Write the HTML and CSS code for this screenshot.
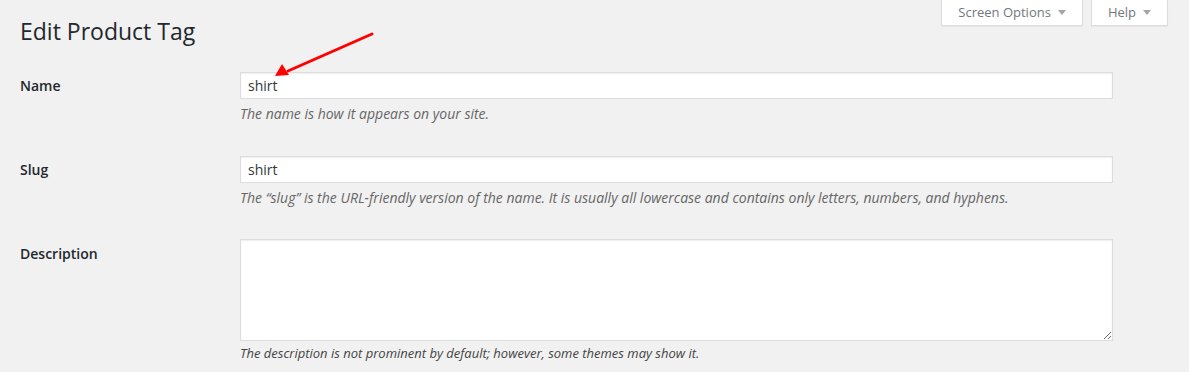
FILE: index.html
```html
<!DOCTYPE html>
<html lang="en">
<head>
<meta charset="utf-8">
<title>Edit Product Tag</title>
<link rel="stylesheet" href="styles.css">
</head>
<body>
<div class="wrap">
  <div class="topbar">
    <h1 class="page-title">Edit Product Tag</h1>
    <div class="screen-links">
      <button class="meta-btn" type="button">Screen Options<span class="caret"></span></button>
      <button class="meta-btn" type="button">Help<span class="caret"></span></button>
    </div>
  </div>

  <form class="form-table">
    <div class="row">
      <label class="th" for="tag-name">Name</label>
      <div class="td">
        <input id="tag-name" class="text-input" type="text" value="shirt">
        <p class="description">The name is how it appears on your site.</p>
      </div>
    </div>
    <div class="row">
      <label class="th" for="tag-slug">Slug</label>
      <div class="td">
        <input id="tag-slug" class="text-input" type="text" value="shirt">
        <p class="description">The “slug” is the URL-friendly version of the name. It is usually all lowercase and contains only letters, numbers, and hyphens.</p>
      </div>
    </div>
    <div class="row">
      <label class="th th-area" for="tag-desc">Description</label>
      <div class="td">
        <textarea id="tag-desc" class="text-area"></textarea>
        <p class="description small">The description is not prominent by default; however, some themes may show it.</p>
      </div>
    </div>
  </form>
</div>

<svg class="annotation" width="120" height="60" viewBox="0 0 120 60" aria-hidden="true">
  <line x1="102" y1="13" x2="18" y2="50" stroke="#f00" stroke-width="3" stroke-linecap="round"/>
  <polygon points="5,55 12,43 19,54" fill="#f00"/>
</svg>
</body>
</html>
```
FILE: styles.css
```css
* { box-sizing: border-box; }

html, body {
  margin: 0;
  padding: 0;
  background: #f1f1f1;
}

body {
  position: relative;
  font-family: "Open Sans", "Liberation Sans", sans-serif;
  font-size: 13px;
  color: #23282d;
  width: 1189px;
  height: 372px;
  overflow: hidden;
}

.wrap {
  padding: 0 20px;
}

.topbar {
  display: flex;
  justify-content: space-between;
  align-items: flex-start;
}

.page-title {
  margin: 0;
  padding: 17px 0 0;
  font-size: 23px;
  font-weight: 400;
  line-height: 29px;
  color: #23282d;
}

.screen-links {
  display: flex;
  gap: 8px;
  margin-right: 1px;
}

.meta-btn {
  display: flex;
  align-items: center;
  gap: 7px;
  height: 26px;
  padding: 0 16px 1px 16px;
  background: #fff;
  border: 1px solid #ddd;
  border-top: none;
  font-family: "Open Sans", "Liberation Sans", sans-serif;
  font-size: 13px;
  color: #72777c;
  box-shadow: 0 1px 1px rgba(0,0,0,.04);
}

.caret {
  width: 0;
  height: 0;
  border-left: 4px solid transparent;
  border-right: 4px solid transparent;
  border-top: 5px solid #a0a5aa;
}

.form-table {
  margin-top: 11px;
}

.row {
  display: grid;
  grid-template-columns: 210px 1fr;
}

.th {
  padding: 20px 10px 20px 0;
  font-size: 14px;
  font-weight: 600;
  line-height: 1.3;
  color: #23282d;
}

.th-area {
  padding-top: 21px;
}

.td {
  padding: 15px 10px 16.5px;
}

.text-input,
.text-area {
  display: block;
  width: 95%;
  margin: 0;
  border: 1px solid #ddd;
  background: #fff;
  color: #32373c;
  font-family: "Open Sans", "Liberation Sans", sans-serif;
  font-size: 14px;
  box-shadow: inset 0 1px 2px rgba(0,0,0,.07);
  border-radius: 0;
  outline: none;
}

.text-input {
  height: 27px;
  padding: 3px 7px;
}

.text-area {
  height: 102px;
  padding: 2px 7px;
}

.description {
  margin: 5px 0 0;
  font-size: 14px;
  line-height: 20px;
  font-style: italic;
  color: #666;
}

.description.small {
  font-size: 13px;
  color: #444;
  margin-top: 2px;
}

.annotation {
  position: absolute;
  left: 270px;
  top: 21px;
}
```
